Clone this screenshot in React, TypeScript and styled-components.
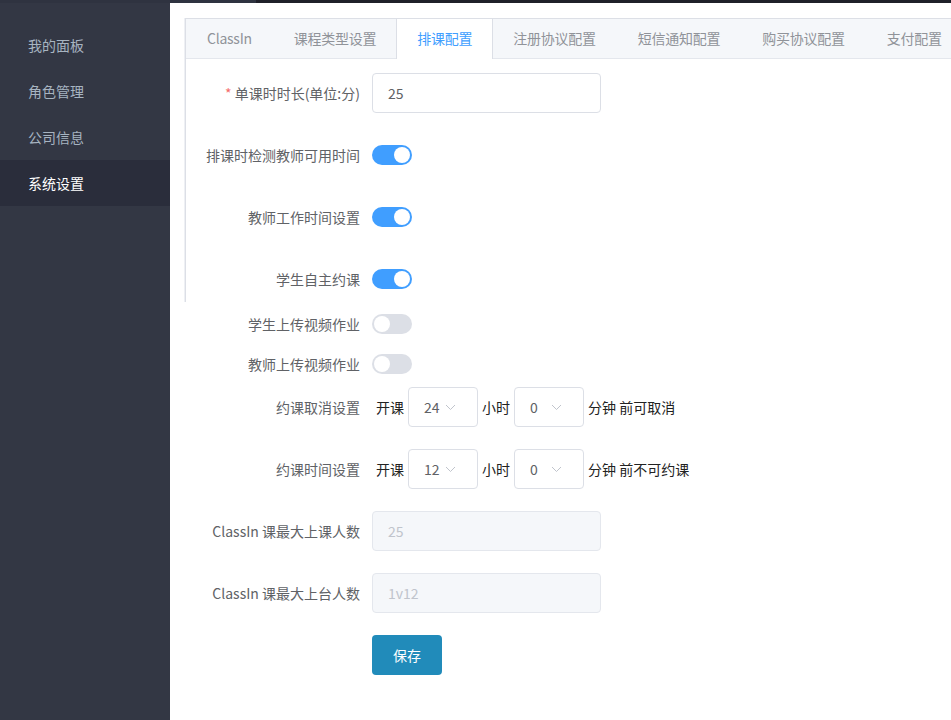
import React from 'react';
import styled, { createGlobalStyle } from 'styled-components';

const GlobalStyle = createGlobalStyle`
  html, body {
    margin: 0;
    padding: 0;
    background: #fff;
    font-family: "Noto Sans CJK SC", "Noto Sans", sans-serif;
  }
  * { box-sizing: border-box; }
`;

const menu = ['我的面板', '角色管理', '公司信息', '系统设置'];
const tabs = ['ClassIn', '课程类型设置', '排课配置', '注册协议配置', '短信通知配置', '购买协议配置', '支付配置'];

const Chevron = () => (
  <svg width="11" height="7" viewBox="0 0 11 7" fill="none">
    <polyline points="1,1 5.5,5.5 10,1" stroke="#c0c4cc" strokeWidth="1" />
  </svg>
);

const App = () => {
  return (
    <>
      <GlobalStyle />
      <Page>
        <TopStrip>
          <StripLight />
        </TopStrip>
        <Body>
          <Sidebar>
            {menu.map((m, i) => (
              <MenuItem key={m} active={i === 3}>{m}</MenuItem>
            ))}
          </Sidebar>
          <Main>
            <Card>
              <TabBar>
                {tabs.map((t, i) => (
                  <Tab key={t} active={i === 2}>{t}</Tab>
                ))}
              </TabBar>
              <CardBody>
                <FormItem mb={22}>
                  <Label><Star>*</Star> 单课时时长(单位:分)</Label>
                  <Input>25</Input>
                </FormItem>
                <FormItem mb={22}>
                  <Label>排课时检测教师可用时间</Label>
                  <Switch on />
                </FormItem>
                <FormItem mb={22}>
                  <Label>教师工作时间设置</Label>
                  <Switch on />
                </FormItem>
                <FormItem mb={5}>
                  <Label>学生自主约课</Label>
                  <Switch on />
                </FormItem>
                <FormItem mb={0}>
                  <Label>学生上传视频作业</Label>
                  <Switch />
                </FormItem>
                <FormItem mb={3}>
                  <Label>教师上传视频作业</Label>
                  <Switch />
                </FormItem>
                <FormItem mb={22}>
                  <Label>约课取消设置</Label>
                  <Inline>开课</Inline>
                  <Select><span>24</span><Chevron /></Select>
                  <Inline>小时</Inline>
                  <Select><span>0</span><Chevron /></Select>
                  <Inline>分钟 前可取消</Inline>
                </FormItem>
                <FormItem mb={22}>
                  <Label>约课时间设置</Label>
                  <Inline>开课</Inline>
                  <Select><span>12</span><Chevron /></Select>
                  <Inline>小时</Inline>
                  <Select><span>0</span><Chevron /></Select>
                  <Inline>分钟 前不可约课</Inline>
                </FormItem>
                <FormItem mb={22}>
                  <Label>ClassIn 课最大上课人数</Label>
                  <Input disabled>25</Input>
                </FormItem>
                <FormItem mb={22}>
                  <Label>ClassIn 课最大上台人数</Label>
                  <Input disabled>1v12</Input>
                </FormItem>
                <FormItem mb={0}>
                  <Label />
                  <SaveButton>保存</SaveButton>
                </FormItem>
              </CardBody>
            </Card>
          </Main>
        </Body>
      </Page>
    </>
  );
};

const Page = styled.div`
  width: 951px;
  height: 720px;
  display: flex;
  flex-direction: column;
  overflow: hidden;
`;

const TopStrip = styled.div`
  height: 3px;
  background: #1f2029;
  display: flex;
`;

const StripLight = styled.div`
  width: 256px;
  background: #2f3340;
`;

const Body = styled.div`
  flex: 1;
  display: flex;
`;

const Sidebar = styled.div`
  width: 170px;
  background: #333744;
  padding-top: 19px;
  display: flex;
  flex-direction: column;
`;

const MenuItem = styled.div<{ active?: boolean }>`
  height: 46px;
  line-height: 46px;
  padding-left: 28px;
  font-size: 14px;
  color: ${p => (p.active ? '#ffffff' : '#a7b4c1')};
  background: ${p => (p.active ? '#2a2d3b' : 'transparent')};
`;

const Main = styled.div`
  flex: 1;
  padding: 15px 0 0 15px;
  min-width: 0;
`;

const Card = styled.div`
  height: 284px;
  border-left: 1px solid #dcdfe6;
  border-top: 1px solid #dcdfe6;
  box-shadow: -1px 0 0 #eef0f4;
  margin-right: -200px;
`;

const TabBar = styled.div`
  height: 40px;
  background: #f5f7fa;
  border-bottom: 1px solid #e4e7ed;
  display: flex;
  white-space: nowrap;
`;

const Tab = styled.div<{ active?: boolean }>`
  height: 40px;
  line-height: 38px;
  padding: 0 20px;
  font-size: 14px;
  letter-spacing: -0.25px;
  color: ${p => (p.active ? '#409eff' : '#909399')};
  background: ${p => (p.active ? '#ffffff' : 'transparent')};
  border-left: 1px solid ${p => (p.active ? '#dcdfe6' : 'transparent')};
  border-right: 1px solid ${p => (p.active ? '#dcdfe6' : 'transparent')};
  margin-left: ${p => (p.active ? '-1px' : '0')};
  margin-right: ${p => (p.active ? '-1px' : '0')};
  ${p => (p.active ? 'position: relative; z-index: 1;' : '')}
`;

const CardBody = styled.div`
  padding: 14px 15px 0 15px;
`;

const FormItem = styled.div<{ mb: number }>`
  display: flex;
  align-items: center;
  height: 40px;
  margin-bottom: ${p => p.mb}px;
`;

const Label = styled.div`
  width: 171px;
  flex-shrink: 0;
  padding-right: 12px;
  text-align: right;
  font-size: 14px;
  color: #606266;
  white-space: nowrap;
`;

const Star = styled.span`
  color: #f56c6c;
`;

const Input = styled.div<{ disabled?: boolean }>`
  width: 229px;
  height: 40px;
  line-height: 38px;
  padding: 0 15px;
  font-size: 14px;
  border: 1px solid ${p => (p.disabled ? '#e4e7ed' : '#dcdfe6')};
  border-radius: 4px;
  background: ${p => (p.disabled ? '#f5f7fa' : '#ffffff')};
  color: ${p => (p.disabled ? '#c0c4cc' : '#606266')};
`;

const Switch = styled.div<{ on?: boolean }>`
  width: 40px;
  height: 20px;
  border-radius: 10px;
  background: ${p => (p.on ? '#409eff' : '#dcdfe6')};
  position: relative;
  &::after {
    content: '';
    position: absolute;
    top: 2px;
    left: ${p => (p.on ? '22px' : '2px')};
    width: 16px;
    height: 16px;
    border-radius: 50%;
    background: #fff;
  }
`;

const Inline = styled.span`
  font-size: 14px;
  color: #222;
  margin: 0 4px;
  white-space: nowrap;
`;

const Select = styled.div`
  width: 70px;
  height: 40px;
  flex-shrink: 0;
  border: 1px solid #dcdfe6;
  border-radius: 4px;
  padding: 0 21px 0 15px;
  display: flex;
  align-items: center;
  justify-content: space-between;
  font-size: 14px;
  color: #606266;
`;

const SaveButton = styled.button`
  width: 70px;
  height: 40px;
  border: none;
  border-radius: 4px;
  background: #218bba;
  color: #fff;
  font-size: 14px;
  font-family: inherit;
`;

export default App;
